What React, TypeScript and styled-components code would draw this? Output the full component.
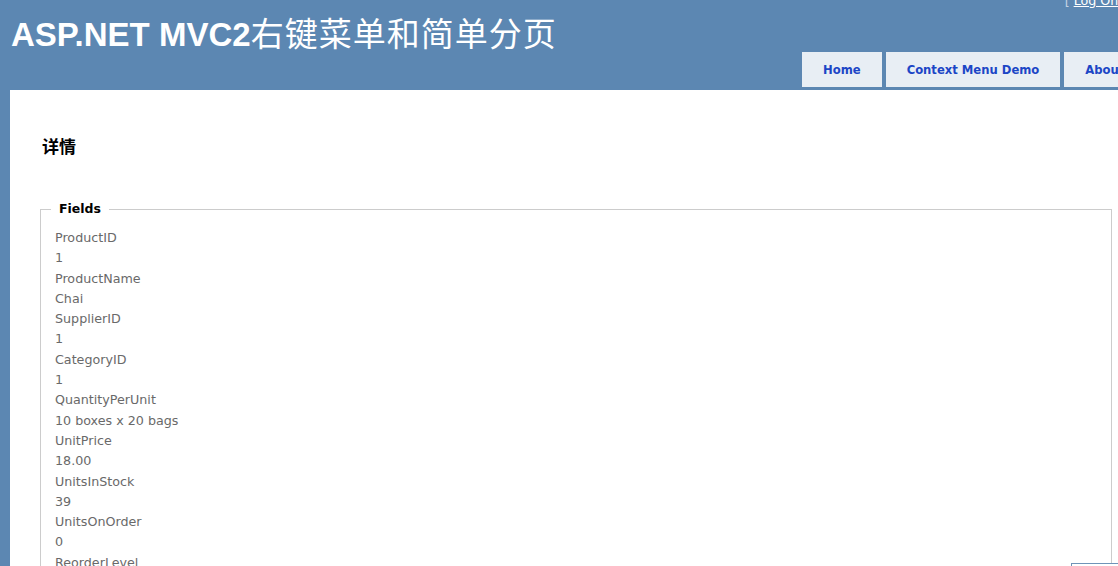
import styled, { createGlobalStyle } from 'styled-components';

const GlobalStyle = createGlobalStyle`
  html, body {
    margin: 0;
    padding: 0;
    overflow: hidden;
    background-color: #5c87b2;
  }
  body {
    font-family: 'DejaVu Sans', Verdana, sans-serif;
    font-size: 12.7px;
    color: #696969;
  }
`;

const fields: [string, string][] = [
  ['ProductID', '1'],
  ['ProductName', 'Chai'],
  ['SupplierID', '1'],
  ['CategoryID', '1'],
  ['QuantityPerUnit', '10 boxes x 20 bags'],
  ['UnitPrice', '18.00'],
  ['UnitsInStock', '39'],
  ['UnitsOnOrder', '0'],
  ['ReorderLevel', '10'],
  ['Discontinued', 'False'],
];

const tabs = ['Home', 'Context Menu Demo', 'About'];

const App = () => {
  return (
    <Page>
      <GlobalStyle />
      <Header>
        <Title>
          ASP.NET MVC2<CjkTitle>右键菜单和简单分页</CjkTitle>
        </Title>
        <HeaderRight>
          <LoginDisplay>
            [ <LoginLink href='#'>Log On</LoginLink> ]
          </LoginDisplay>
          <Menu>
            {tabs.map((tab) => (
              <MenuItem key={tab}>{tab}</MenuItem>
            ))}
          </Menu>
        </HeaderRight>
      </Header>
      <Main>
        <Heading>详情</Heading>
        <Fieldset>
          <Legend>Fields</Legend>
          {fields.map(([label, value]) => (
            <div key={label}>
              <FieldLine>{label}</FieldLine>
              <FieldLine>{value}</FieldLine>
            </div>
          ))}
        </Fieldset>
      </Main>
      <MenuStub />
    </Page>
  );
};

export default App;

const Page = styled.div`
  position: relative;
  box-sizing: border-box;
  width: 1142px;
  padding-left: 10px;
`;

const Header = styled.div`
  display: grid;
  grid-template-columns: 792px 1fr;
  height: 90px;
`;

const Title = styled.h1`
  margin: 12px 0 0 1px;
  font-family: 'Liberation Sans', Arial, sans-serif;
  font-size: 33px;
  line-height: 40px;
  font-weight: bold;
  color: #ffffff;
  white-space: nowrap;
`;

const CjkTitle = styled.span`
  font-family: 'Noto Sans CJK SC', sans-serif;
  font-weight: 400;
  font-size: 33px;
  letter-spacing: 1px;
`;

const HeaderRight = styled.div`
  display: flex;
  flex-direction: column;
  justify-content: space-between;
  padding-bottom: 3px;
`;

const LoginDisplay = styled.div`
  margin-top: -7px;
  padding-right: 18px;
  text-align: right;
  line-height: 16px;
  color: #c4d3e3;
  white-space: nowrap;
`;

const LoginLink = styled.a`
  color: #ffffff;
  text-decoration: underline;
`;

const Menu = styled.ul`
  display: flex;
  gap: 4px;
  margin: 0;
  padding: 0;
  list-style: none;
  white-space: nowrap;
`;

const MenuItem = styled.li`
  display: flex;
  align-items: center;
  height: 35px;
  padding: 1px 21px 0 21px;
  box-sizing: border-box;
  background-color: #e8eef4;
  color: #1c46c6;
  font-size: 11.6px;
  font-weight: bold;
`;

const Main = styled.div`
  background-color: #ffffff;
  padding: 30px 30px 15px 30px;
  min-height: 600px;
`;

const Heading = styled.h2`
  margin: 14px 0 0 2px;
  font-family: 'Noto Sans CJK SC', sans-serif;
  font-size: 17px;
  line-height: 24px;
  font-weight: bold;
  color: #000000;
`;

const Fieldset = styled.fieldset`
  margin: 42px 0 0 0;
  padding: 10px 13px 0 13px;
  border: 1px solid #cccccc;
`;

const Legend = styled.legend`
  margin-left: -3px;
  padding: 0 8px;
  font-size: 12.5px;
  line-height: 18px;
  font-weight: bold;
  color: #000000;
`;

const FieldLine = styled.div`
  padding-left: 1px;
  line-height: 20.3px;
`;

const MenuStub = styled.div`
  position: absolute;
  left: 1071px;
  top: 563px;
  width: 80px;
  height: 30px;
  background-color: #ffffff;
  border: 1px solid #6f93b8;
`;
